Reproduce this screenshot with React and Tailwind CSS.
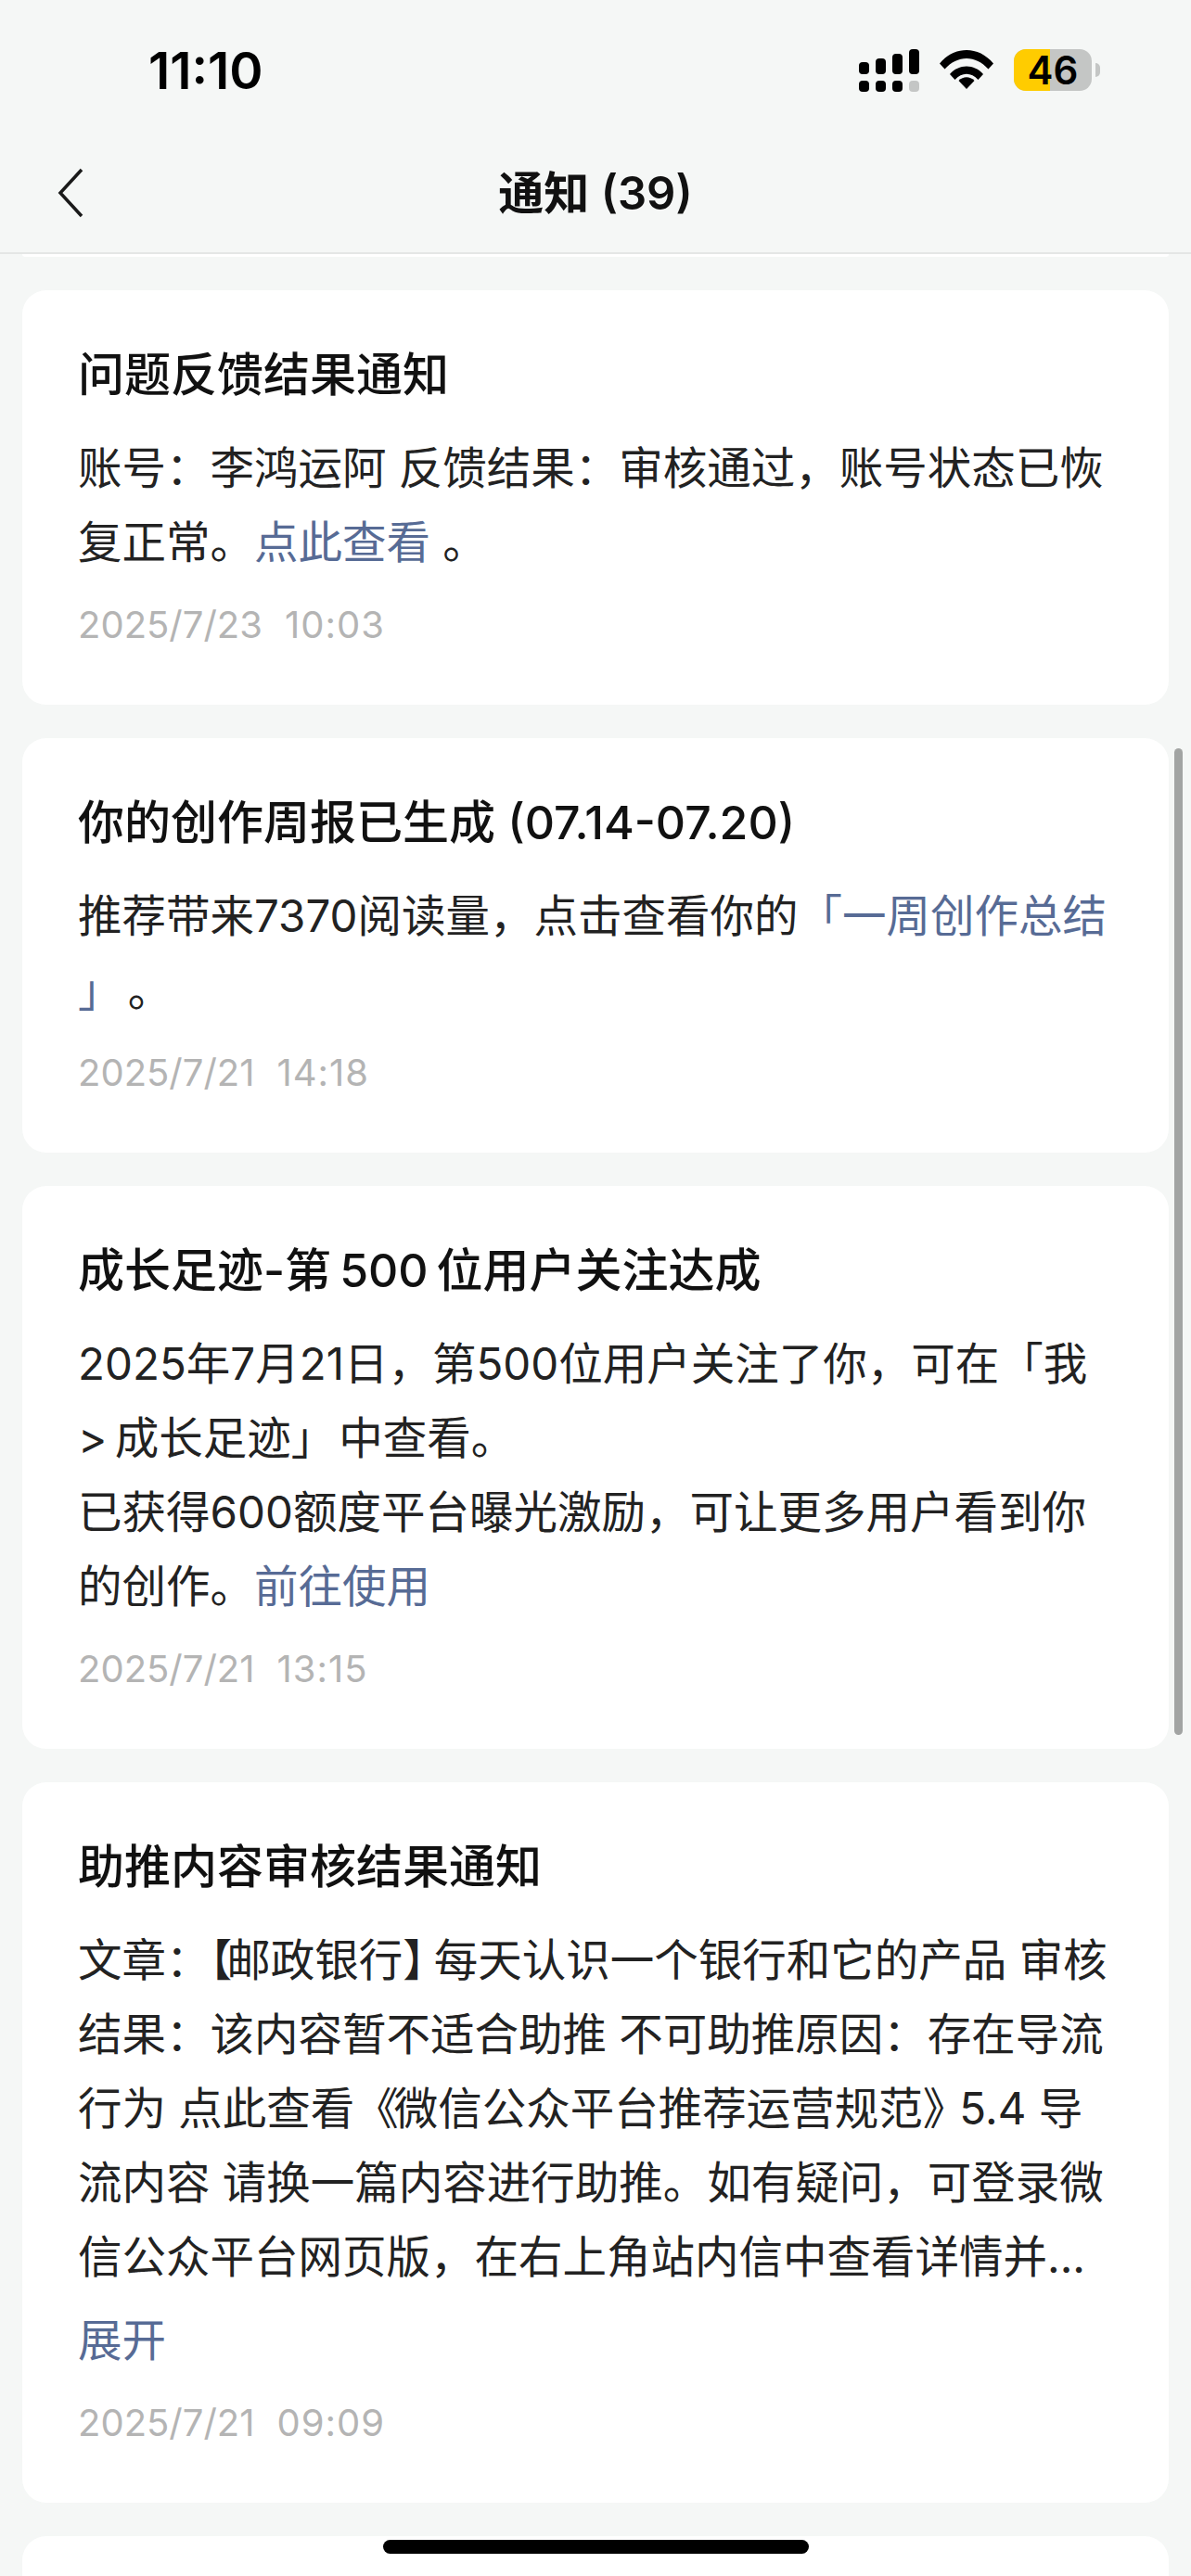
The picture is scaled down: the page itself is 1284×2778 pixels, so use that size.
// App.jsx
import React from 'react';

const FONT = '[font-family:Inter,"Noto_Sans_CJK_SC",sans-serif]';

// 상태바 신호 아이콘 (듀얼 심)
const SignalIcon = () => (
  <svg width="65" height="46" viewBox="0 0 65 46" className="shrink-0">
    <rect x="0" y="14" width="11" height="13" rx="4" fill="#000" />
    <rect x="18" y="10" width="11" height="17" rx="4" fill="#000" />
    <rect x="36" y="5" width="11" height="22" rx="4" fill="#000" />
    <rect x="54" y="0" width="11" height="27" rx="4" fill="#000" />
    <rect x="0" y="34" width="11" height="12" rx="4" fill="#000" />
    <rect x="18" y="34" width="11" height="12" rx="4" fill="#000" />
    <rect x="36" y="34" width="11" height="12" rx="4" fill="#000" />
    <rect x="54" y="34" width="11" height="12" rx="4" fill="#c4c6c5" />
  </svg>
);

const WifiIcon = () => (
  <svg width="58" height="42" viewBox="0 0 58 42" className="mt-[1px] shrink-0">
    <path d="M0 14.5 C16 -4.8 42 -4.8 58 14.5 L52.5 20.5 C39 5 19 5 5.5 20.5 Z" fill="#000" />
    <path d="M11 26 C20.5 14.5 37.5 14.5 47 26 L41.5 32 C34 23.5 24 23.5 16.5 32 Z" fill="#000" />
    <path d="M20.5 33 C25.5 28 32.5 28 37.5 33 L29 42 Z" fill="#000" />
  </svg>
);

const Battery = () => (
  <div className="flex items-center">
    <div className="relative flex h-[45px] w-[84px] items-center justify-center rounded-[13px] bg-[#c4c6c5]">
      <div className="absolute inset-y-0 left-0 w-[39px] rounded-l-[13px] bg-[#ffcc00]" />
      <span className="relative text-[42px] leading-[45px] font-semibold text-black">46</span>
    </div>
    <div className="ml-[4px] h-[15px] w-[5px] rounded-r-full bg-[#c4c6c5]" />
  </div>
);

const StatusBar = () => (
  <div className="flex h-[140px] items-start justify-between pr-[98px] pl-[160px]">
    <span className="mt-[46px] text-[55px] leading-[60px] font-semibold text-black">11:10</span>
    <div className="mt-[53px] flex items-start gap-[22px]">
      <SignalIcon />
      <WifiIcon />
      <Battery />
    </div>
  </div>
);

const Header = () => (
  <div className="relative flex h-[134px] items-start justify-center border-b-2 border-[#e4e6e5] bg-[#f5f7f6]">
    <svg width="30" height="54" viewBox="0 0 30 54" fill="none" className="absolute top-[41px] left-[61px]">
      <path d="M27 2 L4 27 L27 52" stroke="#1a1a1a" strokeWidth="3.5" />
    </svg>
    <span className="mt-[41px] text-[49px] leading-[56px] font-semibold text-[#111]">通知 (39)</span>
  </div>
);

const Link = ({ children }) => <span className="text-[#576b95]">{children}</span>;

// 알림 카드
const NoticeCard = ({ title, date, time, expand, children }) => (
  <div className="mb-[36px] rounded-[26px] bg-white px-[60px] pt-[56px] pb-[61px]">
    <div className="text-[50px] leading-[70px] font-medium whitespace-nowrap text-[#111]">{title}</div>
    <div className="mt-[26px] text-[47.5px] leading-[80px] whitespace-nowrap text-[#222]">{children}</div>
    {expand && <div className="mt-[10px] text-[47.5px] leading-[80px] text-[#576b95]">展开</div>}
    <div className="mt-[24px] flex gap-[24px] text-[40px] leading-[50px] text-[#b4b4b4]">
      <span>{date}</span>
      <span className="tracking-[1px]">{time}</span>
    </div>
  </div>
);

const App = () => {
  return (
    <div className={`relative h-[2778px] w-[1284px] overflow-hidden bg-[#f5f7f6] ${FONT}`}>
      <StatusBar />
      <Header />

      <div className="px-[24px]">
        {/* 이전 카드의 끝부분 */}
        <div className="mb-[36px] h-[3px] rounded-b-[3px] bg-white" />

        <NoticeCard title="问题反馈结果通知" date="2025/7/23" time="10:03">
          账号：李鸿运阿 反馈结果：审核通过，账号状态已恢
          <br />
          复正常。<Link>点此查看</Link> 。
        </NoticeCard>

        <NoticeCard title="你的创作周报已生成 (07.14-07.20)" date="2025/7/21" time="14:18">
          推荐带来7370阅读量，点击查看你的<Link>「一周创作总结</Link>
          <br />
          <Link>
            <span className="tracking-[-7px]">」</span>
          </Link>{' '}
          。
        </NoticeCard>

        <NoticeCard
          title={
            <>
              成长足迹-第<span className="mx-[9px]">500</span>位用户关注达成
            </>
          }
          date="2025/7/21"
          time="13:15"
        >
          2025年7月21日，第500位用户关注了你，可在「我
          <br />
          <span className="tracking-[-5px]">&gt;</span> 成长足迹」<span className="ml-[4px]">中查看。</span>
          <br />
          已获得600额度平台曝光激励，可让更多用户看到你
          <br />
          的创作。<Link>前往使用</Link>
        </NoticeCard>

        <NoticeCard title="助推内容审核结果通知" date="2025/7/21" time="09:09" expand>
          文章：<span className="tracking-[-6px]">【</span>邮政银行<span className="tracking-[-14px]">】</span>每天认识一个银行和它的产品 审核
          <br />
          结果：该内容暂不适合助推 不可助推原因：存在导流
          <br />
          行为 点此查看<span className="tracking-[-5px]">《</span>微信公众平台推荐运营规范<span className="tracking-[-8px]">》</span>5.4 导
          <br />
          流内容 请换一篇内容进行助推。如有疑问，可登录微
          <br />
          信公众平台网页版，在右上角站内信中查看详情并...
        </NoticeCard>

        <div className="h-[200px] rounded-t-[26px] bg-white" />
      </div>

      {/* 스크롤바 */}
      <div className="absolute top-[807px] right-[9px] h-[1064px] w-[9px] rounded-full bg-[#a2a4a3]" />
      {/* 홈 인디케이터 */}
      <div className="absolute top-[2739px] left-[413px] h-[15px] w-[459px] rounded-full bg-black" />
    </div>
  );
};

export default App;
